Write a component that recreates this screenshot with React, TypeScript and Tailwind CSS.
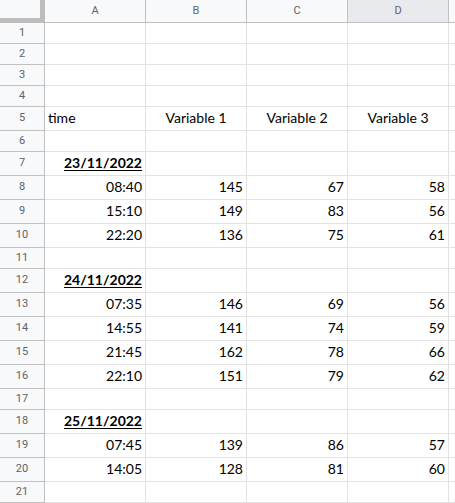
import React from "react";

type Row = { n: number; h: number; a?: string; b?: string; c?: string; d?: string; kind?: "head" | "date" | "num" };

const rows: Row[] = [
  { n: 1, h: 21 },
  { n: 2, h: 21 },
  { n: 3, h: 21 },
  { n: 4, h: 21 },
  { n: 5, h: 24, a: "time", b: "Variable 1", c: "Variable 2", d: "Variable 3", kind: "head" },
  { n: 6, h: 21 },
  { n: 7, h: 24, a: "23/11/2022", kind: "date" },
  { n: 8, h: 24, a: "08:40", b: "145", c: "67", d: "58", kind: "num" },
  { n: 9, h: 24, a: "15:10", b: "149", c: "83", d: "56", kind: "num" },
  { n: 10, h: 24, a: "22:20", b: "136", c: "75", d: "61", kind: "num" },
  { n: 11, h: 21 },
  { n: 12, h: 24, a: "24/11/2022", kind: "date" },
  { n: 13, h: 24, a: "07:35", b: "146", c: "69", d: "56", kind: "num" },
  { n: 14, h: 24, a: "14:55", b: "141", c: "74", d: "59", kind: "num" },
  { n: 15, h: 24, a: "21:45", b: "162", c: "78", d: "66", kind: "num" },
  { n: 16, h: 24, a: "22:10", b: "151", c: "79", d: "62", kind: "num" },
  { n: 17, h: 21 },
  { n: 18, h: 24, a: "25/11/2022", kind: "date" },
  { n: 19, h: 24, a: "07:45", b: "139", c: "86", d: "57", kind: "num" },
  { n: 20, h: 24, a: "14:05", b: "128", c: "81", d: "60", kind: "num" },
  { n: 21, h: 21 },
];

const cellFont = { fontFamily: "Lato, 'Open Sans', sans-serif" };

function Cell({ text, align, bold }: { text?: string; align: "left" | "right" | "center"; bold?: boolean }) {
  const al = align === "left" ? "justify-start pl-[3px]" : align === "right" ? "justify-end pr-[3px]" : "justify-center";
  return (
    <div className={`flex items-end pb-[3px] border-r border-b border-[#e2e2e2] bg-white text-[14px] leading-[18px] text-black overflow-hidden whitespace-nowrap ${al}`} style={cellFont}>
      {text ? <span className={bold ? "font-bold underline underline-offset-2" : ""}>{text}</span> : null}
    </div>
  );
}

export default function App() {
  return (
    <div className="w-[455px] h-[503px] overflow-hidden bg-white">
      <div className="grid grid-cols-[45px_101px_101px_101px_101px_20px]" style={{ fontFamily: "Roboto, 'Liberation Sans', sans-serif" }}>
        {/* header row */}
        <div className="h-[23px] bg-[#f8f9fa] relative">
          <div className="absolute left-0 top-0 w-[40px] h-[18px] bg-[#f8f9fa]" />
          <div className="absolute right-0 top-0 w-[5px] h-[23px] bg-[#bdbdbd]" />
          <div className="absolute left-0 bottom-0 w-[45px] h-[5px] bg-[#bdbdbd]" />
        </div>
        {["A", "B", "C", "D"].map((l) => (
          <div
            key={l}
            className={`h-[23px] flex items-center justify-center border-r border-b border-[#c0c0c0] text-[11px] text-[#5f6368] ${l === "D" ? "bg-[#e8eaed]" : "bg-[#f8f9fa]"}`}
          >
            {l}
          </div>
        ))}
        <div className="h-[23px] border-b border-[#c0c0c0] bg-[#f8f9fa]" />
        {rows.map((r) => (
          <React.Fragment key={r.n}>
            <div
              className="flex items-center justify-center border-r border-b border-[#c0c0c0] bg-[#f8f9fa] text-[11px] text-[#5f6368]"
              style={{ height: r.h }}
            >
              {r.n}
            </div>
            <Cell text={r.a} align={r.kind === "head" ? "left" : "right"} bold={r.kind === "date"} />
            <Cell text={r.b} align={r.kind === "head" ? "center" : "right"} />
            <Cell text={r.c} align={r.kind === "head" ? "center" : "right"} />
            <Cell text={r.d} align={r.kind === "head" ? "center" : "right"} />
            <div className="border-b border-[#e2e2e2] bg-white" />
          </React.Fragment>
        ))}
      </div>
    </div>
  );
}
